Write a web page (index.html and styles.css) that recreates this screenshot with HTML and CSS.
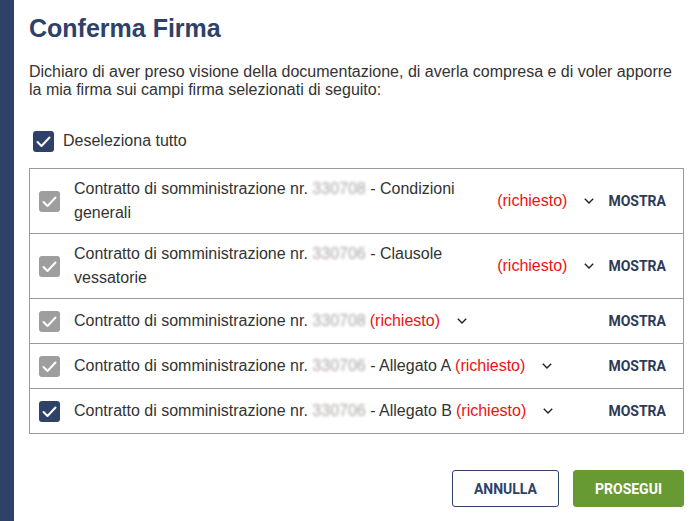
FILE: index.html
```html
<!DOCTYPE html>
<html lang="it">
<head>
<meta charset="utf-8">
<title>Conferma Firma</title>
<link rel="stylesheet" href="styles.css">
</head>
<body>
<div class="app">
  <div class="sidebar"></div>
  <main class="dialog">
    <h1 class="title">Conferma Firma</h1>
    <p class="intro">Dichiaro di aver preso visione della documentazione, di averla compresa e di voler apporre la mia firma sui campi firma selezionati di seguito:</p>
    <label class="select-all">
      <span class="cb cb-on"><svg viewBox="0 0 21 21"><path d="M4.5 11 L8.5 15 L16.5 6.5"/></svg></span>
      <span>Deseleziona tutto</span>
    </label>
    <div class="doc-list">
      <div class="doc-row">
        <span class="cb cb-off"><svg viewBox="0 0 21 21"><path d="M4.5 11 L8.5 15 L16.5 6.5"/></svg></span>
        <span class="doc-name">Contratto di somministrazione nr. <span class="redacted">330708</span> - Condizioni generali</span>
        <span class="req">(richiesto)</span>
        <svg class="chev" viewBox="0 0 10 6"><path d="M0.8 0.8 L5 5 L9.2 0.8"/></svg>
        <button class="show">MOSTRA</button>
      </div>
      <div class="doc-row">
        <span class="cb cb-off"><svg viewBox="0 0 21 21"><path d="M4.5 11 L8.5 15 L16.5 6.5"/></svg></span>
        <span class="doc-name">Contratto di somministrazione nr. <span class="redacted">330706</span> - Clausole vessatorie</span>
        <span class="req">(richiesto)</span>
        <svg class="chev" viewBox="0 0 10 6"><path d="M0.8 0.8 L5 5 L9.2 0.8"/></svg>
        <button class="show">MOSTRA</button>
      </div>
      <div class="doc-row">
        <span class="cb cb-off"><svg viewBox="0 0 21 21"><path d="M4.5 11 L8.5 15 L16.5 6.5"/></svg></span>
        <span class="doc-name">Contratto di somministrazione nr. <span class="redacted">330708</span></span>
        <span class="req">(richiesto)</span>
        <svg class="chev" viewBox="0 0 10 6"><path d="M0.8 0.8 L5 5 L9.2 0.8"/></svg>
        <button class="show">MOSTRA</button>
      </div>
      <div class="doc-row">
        <span class="cb cb-off"><svg viewBox="0 0 21 21"><path d="M4.5 11 L8.5 15 L16.5 6.5"/></svg></span>
        <span class="doc-name">Contratto di somministrazione nr. <span class="redacted">330706</span> - Allegato A</span>
        <span class="req">(richiesto)</span>
        <svg class="chev" viewBox="0 0 10 6"><path d="M0.8 0.8 L5 5 L9.2 0.8"/></svg>
        <button class="show">MOSTRA</button>
      </div>
      <div class="doc-row">
        <span class="cb cb-on"><svg viewBox="0 0 21 21"><path d="M4.5 11 L8.5 15 L16.5 6.5"/></svg></span>
        <span class="doc-name">Contratto di somministrazione nr. <span class="redacted">330706</span> - Allegato B</span>
        <span class="req">(richiesto)</span>
        <svg class="chev" viewBox="0 0 10 6"><path d="M0.8 0.8 L5 5 L9.2 0.8"/></svg>
        <button class="show">MOSTRA</button>
      </div>
    </div>
    <div class="actions">
      <button class="btn btn-outline">ANNULLA</button>
      <button class="btn btn-primary">PROSEGUI</button>
    </div>
  </main>
</div>
</body>
</html>
```
FILE: styles.css
```css
html, body {
  margin: 0;
  padding: 0;
  background: #ffffff;
}

body {
  font-family: "Liberation Sans", Arial, sans-serif;
  color: #333333;
  font-size: 16px;
}

.app {
  display: flex;
  height: 521px;
  overflow: hidden;
}

.sidebar {
  width: 14px;
  flex: 0 0 14px;
  background: #2e4168;
}

.dialog {
  flex: 1;
  padding: 15px 14px 0 15px;
  min-width: 0;
}

.title {
  margin: 0;
  font-size: 25px;
  line-height: 27px;
  font-weight: bold;
  color: #2e4168;
}

.intro {
  margin: 21px 0 0;
  font-size: 16px;
  line-height: 18px;
  color: #333333;
}

.select-all {
  display: flex;
  align-items: center;
  height: 22px;
  margin-top: 31px;
  font-size: 16px;
  color: #333333;
}

.select-all .cb {
  margin-left: 4px;
  margin-right: 9px;
}

.cb {
  width: 21px;
  height: 21px;
  flex: 0 0 21px;
  border-radius: 3px;
  display: inline-flex;
  align-items: center;
  justify-content: center;
}

.cb svg {
  width: 21px;
  height: 21px;
  fill: none;
  stroke: #ffffff;
  stroke-width: 2;
  stroke-linecap: round;
  stroke-linejoin: round;
}

.cb-on {
  background: #2e4168;
}

.cb-off {
  background: #9e9e9e;
}

.doc-list {
  margin-top: 16px;
  border: 1px solid #9a9a9a;
}

.doc-row {
  display: flex;
  align-items: center;
  min-height: 28px;
  padding: 8px 17px 8px 9px;
  border-bottom: 1px solid #9a9a9a;
}

.doc-row:last-child {
  border-bottom: 0;
}

.doc-row .cb {
  margin-right: 14px;
}

.doc-name {
  flex: 0 1 auto;
  min-width: 0;
  line-height: 24px;
  color: #333333;
}

.redacted {
  display: inline-block;
  color: #aaa6a2;
  filter: blur(1.4px);
}

.req {
  flex: 0 0 auto;
  margin-left: 4px;
  color: #ee1111;
  line-height: 24px;
}

.chev {
  flex: 0 0 10px;
  width: 10px;
  height: 6px;
  margin-left: 17px;
  margin-right: 14px;
  fill: none;
  stroke: #222222;
  stroke-width: 1.4;
}

.show {
  margin-left: auto;
  flex: 0 0 auto;
  background: none;
  border: 0;
  padding: 0;
  font-family: Roboto, "Liberation Sans", Arial, sans-serif;
  font-size: 14px;
  font-weight: bold;
  color: #2e3a55;
  cursor: pointer;
}

.actions {
  display: flex;
  justify-content: flex-end;
  gap: 14px;
  margin-top: 36px;
}

.btn {
  box-sizing: border-box;
  height: 37px;
  padding: 0 21px;
  border-radius: 3px;
  font-family: Roboto, "Liberation Sans", Arial, sans-serif;
  font-size: 14px;
  font-weight: bold;
  cursor: pointer;
}

.btn-outline {
  background: #ffffff;
  border: 1px solid #2e4168;
  color: #2e4168;
}

.btn-primary {
  background: #689a34;
  border: 1px solid #689a34;
  color: #ffffff;
}
```
